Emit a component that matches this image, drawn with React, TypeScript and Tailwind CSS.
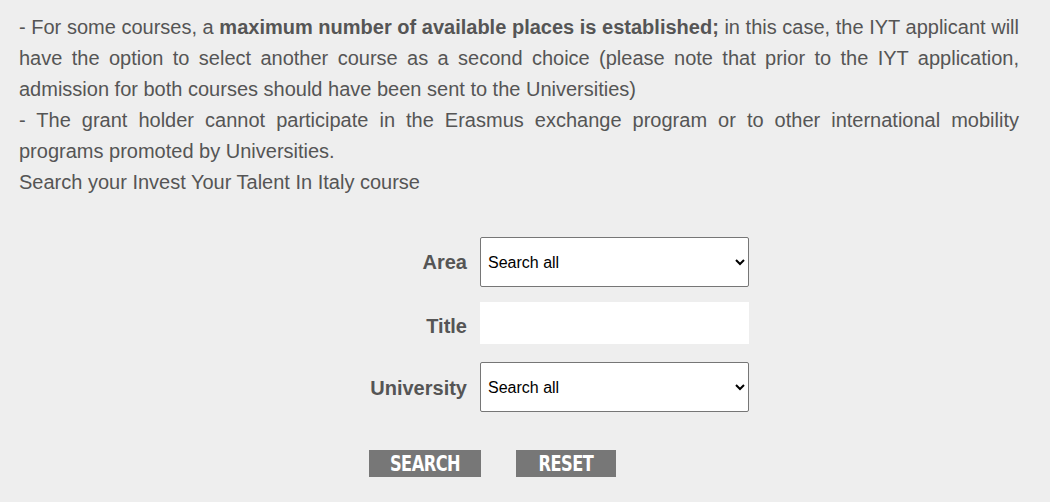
import React, { useState } from 'react';

const AREAS = ['Search all', 'Architecture', 'Economics', 'Engineering', 'Design'];
const UNIVERSITIES = ['Search all', 'Politecnico di Milano', 'Università di Bologna', 'Sapienza Università di Roma'];

const FormRow: React.FC<{ label: string; className?: string; labelClass?: string; children: React.ReactNode }> = ({
  label,
  className,
  labelClass,
  children,
}) => (
  <div className={`flex items-center ${className ?? ''}`}>
    <label className={`w-[110px] pr-[13px] text-right text-[20px] font-bold text-[#555] ${labelClass ?? ''}`}>{label}</label>
    {children}
  </div>
);

const App: React.FC = () => {
  const [area, setArea] = useState('Search all');
  const [title, setTitle] = useState('');
  const [university, setUniversity] = useState('Search all');

  const reset = () => {
    setArea('Search all');
    setTitle('');
    setUniversity('Search all');
  };

  return (
    <div className="min-h-[502px] w-full bg-[#eeeeee] font-['Liberation_Sans',Arial,sans-serif] text-[#555]">
      <div className="pl-[19px] pr-[31px] pt-[12px] text-justify text-[20px] leading-[31px]">
        <p>
          - For some courses, a <strong>maximum number of available places is established;</strong> in this case, the IYT
          applicant will have the option to select another course as a second choice (please note that prior to the IYT
          application, admission for both courses should have been sent to the Universities)
        </p>
        <p>
          - The grant holder cannot participate in the Erasmus exchange program or to other international mobility
          programs promoted by Universities.
        </p>
        <p>Search your Invest Your Talent In Italy course</p>
      </div>

      <form className="ml-[370px] mt-[39px]" onSubmit={(e) => e.preventDefault()}>
        <FormRow label="Area">
          <select
            value={area}
            onChange={(e) => setArea(e.target.value)}
            className="h-[50px] w-[269px] rounded-[2px] border border-[#767676] bg-white pl-[3px] text-[16px] text-black"
          >
            {AREAS.map((a) => (
              <option key={a}>{a}</option>
            ))}
          </select>
        </FormRow>
        <FormRow label="Title" className="mt-[15px]" labelClass="pt-[5px]">
          <input
            value={title}
            onChange={(e) => setTitle(e.target.value)}
            className="h-[42px] w-[269px] bg-white px-2 text-[16px] text-black outline-none"
          />
        </FormRow>
        <FormRow label="University" className="mt-[18px]" labelClass="pt-[1px]">
          <select
            value={university}
            onChange={(e) => setUniversity(e.target.value)}
            className="h-[50px] w-[269px] rounded-[2px] border border-[#767676] bg-white pl-[3px] text-[16px] text-black"
          >
            {UNIVERSITIES.map((u) => (
              <option key={u}>{u}</option>
            ))}
          </select>
        </FormRow>

        <div className="-ml-[1px] mt-[38px] flex gap-[35px] font-['Liberation_Sans_Narrow','DejaVu_Sans_Condensed',Impact,sans-serif]">
          <button type="submit" className="flex h-[27px] w-[112px] items-center justify-center bg-[#777] text-[18px] font-bold tracking-[-0.5px] text-white">
            <span className="inline-block scale-y-[1.15]">SEARCH</span>
          </button>
          <button type="button" onClick={reset} className="flex h-[27px] w-[100px] items-center justify-center bg-[#777] text-[18px] font-bold tracking-[-0.5px] text-white">
            <span className="inline-block scale-y-[1.15]">RESET</span>
          </button>
        </div>
      </form>
    </div>
  );
};

export default App;
